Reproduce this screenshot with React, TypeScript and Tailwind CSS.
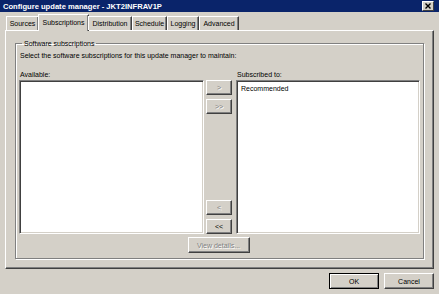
import React from "react";

function Btn({
  label,
  w,
  h,
  disabled,
  isDefault,
}: {
  label: string;
  w: string;
  h: string;
  disabled?: boolean;
  isDefault?: boolean;
}) {
  return (
    <div
      className={`${w} ${h} flex items-center justify-center bg-[#d4d0c8] ${
        isDefault
          ? "border border-black shadow-[inset_1px_1px_#fff,inset_-1px_-1px_#808080]"
          : "border-r border-b border-r-[#404040] border-b-[#404040] border-l border-t border-l-white border-t-white shadow-[inset_-1px_-1px_#808080]"
      }`}
    >
      <span
        className={
          disabled
            ? "text-[#808080] [text-shadow:1px_1px_0_#fff]"
            : "text-black"
        }
      >
        {label}
      </span>
    </div>
  );
}

function ListBox({ w, children }: { w: string; children?: React.ReactNode }) {
  return (
    <div
      className={`${w} h-[154px] bg-white border-l border-t border-l-[#808080] border-t-[#808080] border-r border-b border-r-white border-b-white shadow-[inset_1px_1px_#404040,inset_-1px_-1px_#d4d0c8] px-[4px] py-[3px]`}
    >
      {children}
    </div>
  );
}

export default function App() {
  const tabs = [
    { t: "Sources", w: "w-[33px]" },
    { t: "Subscriptions", w: "w-[51px]", sel: true },
    { t: "Distribution", w: "w-[44px]" },
    { t: "Schedule", w: "w-[35px]" },
    { t: "Logging", w: "w-[32px]" },
    { t: "Advanced", w: "w-[40px]" },
  ];
  return (
    <div className="w-[439px] h-[294px] bg-[#d4d0c8] overflow-hidden flex flex-col font-['Liberation_Sans',Arial,sans-serif] text-[7px] leading-[9px] text-black">
      {/* Title bar */}
      <div className="h-[12px] bg-[#0a246a] flex items-center justify-between pl-[3px] pr-[5px]">
        <span className="text-white font-bold text-[7.6px]">
          Configure update manager - JKT2INFRAV1P
        </span>
        <div className="w-[12px] h-[10px] bg-[#d4d0c8] border-l border-t border-white border-r border-b border-r-[#404040] border-b-[#404040] flex items-center justify-center">
          <svg width="6" height="6" viewBox="0 0 6 6">
            <path d="M0.5 0.5 L5.5 5.5 M5.5 0.5 L0.5 5.5" stroke="#000" strokeWidth="1.4" />
          </svg>
        </div>
      </div>

      {/* Tabs */}
      <div className="h-[18px] flex items-end pl-[6px] relative z-10">
        {tabs.map((tb) =>
          tb.sel ? (
            <div
              key={tb.t}
              className={`${tb.w} h-[17px] -mb-px -mx-[1px] bg-[#d4d0c8] border-l border-t border-l-white border-t-white border-r border-r-[#404040] shadow-[inset_-1px_0_#808080] flex items-start justify-center pt-[3px]`}
            >
              {tb.t}
            </div>
          ) : (
            <div
              key={tb.t}
              className={`${tb.w} h-[14px] bg-[#d4d0c8] border-l border-t border-l-white border-t-white border-r border-r-[#404040] shadow-[inset_-1px_0_#808080] flex items-center justify-center`}
            >
              {tb.t}
            </div>
          )
        )}
      </div>

      {/* Panel */}
      <div className="ml-[5px] w-[429px] h-[239px] border-l border-t border-l-white border-t-white border-r border-b border-r-[#404040] border-b-[#404040] shadow-[inset_-1px_-1px_#808080] pl-[9px] pt-[8px]">
        <fieldset className="w-[408px] h-[220px] border border-[#808080] shadow-[1px_1px_0_#fff,inset_1px_1px_0_#fff] px-[3px] pt-[2px]">
          <legend className="ml-[3px] px-[2px]">Software subscriptions</legend>
          <div className="mt-[1px] pl-[1px]">
            Select the software subscriptions for this update manager to maintain:
          </div>
          <div className="flex mt-[10px] pl-[1px]">
            <div className="w-[217px]">Available:</div>
            <div>Subscribed to:</div>
          </div>
          <div className="flex mt-[1px]">
            <ListBox w="w-[185px]" />
            <div className="w-[27px] ml-[2px] h-[154px] flex flex-col">
              <Btn label=">" w="w-[26px]" h="h-[15px]" disabled />
              <div className="mt-[4px]">
                <Btn label=">>" w="w-[26px]" h="h-[15px]" disabled />
              </div>
              <div className="mt-auto">
                <Btn label="<" w="w-[26px]" h="h-[15px]" disabled />
              </div>
              <div className="mt-[4px]">
                <Btn label="<<" w="w-[26px]" h="h-[15px]" />
              </div>
            </div>
            <div className="ml-[3px]">
              <ListBox w="w-[184px]">
                <div>Recommended</div>
              </ListBox>
            </div>
          </div>
          <div className="flex justify-center mt-[3px] pr-[2px]">
            <Btn label="View details..." w="w-[62px]" h="h-[16px]" disabled />
          </div>
        </fieldset>
      </div>

      {/* Footer */}
      <div className="flex justify-end gap-[5px] pr-[5px] mt-[4px]">
        <Btn label="OK" w="w-[50px]" h="h-[16px]" isDefault />
        <Btn label="Cancel" w="w-[50px]" h="h-[16px]" />
      </div>
    </div>
  );
}
